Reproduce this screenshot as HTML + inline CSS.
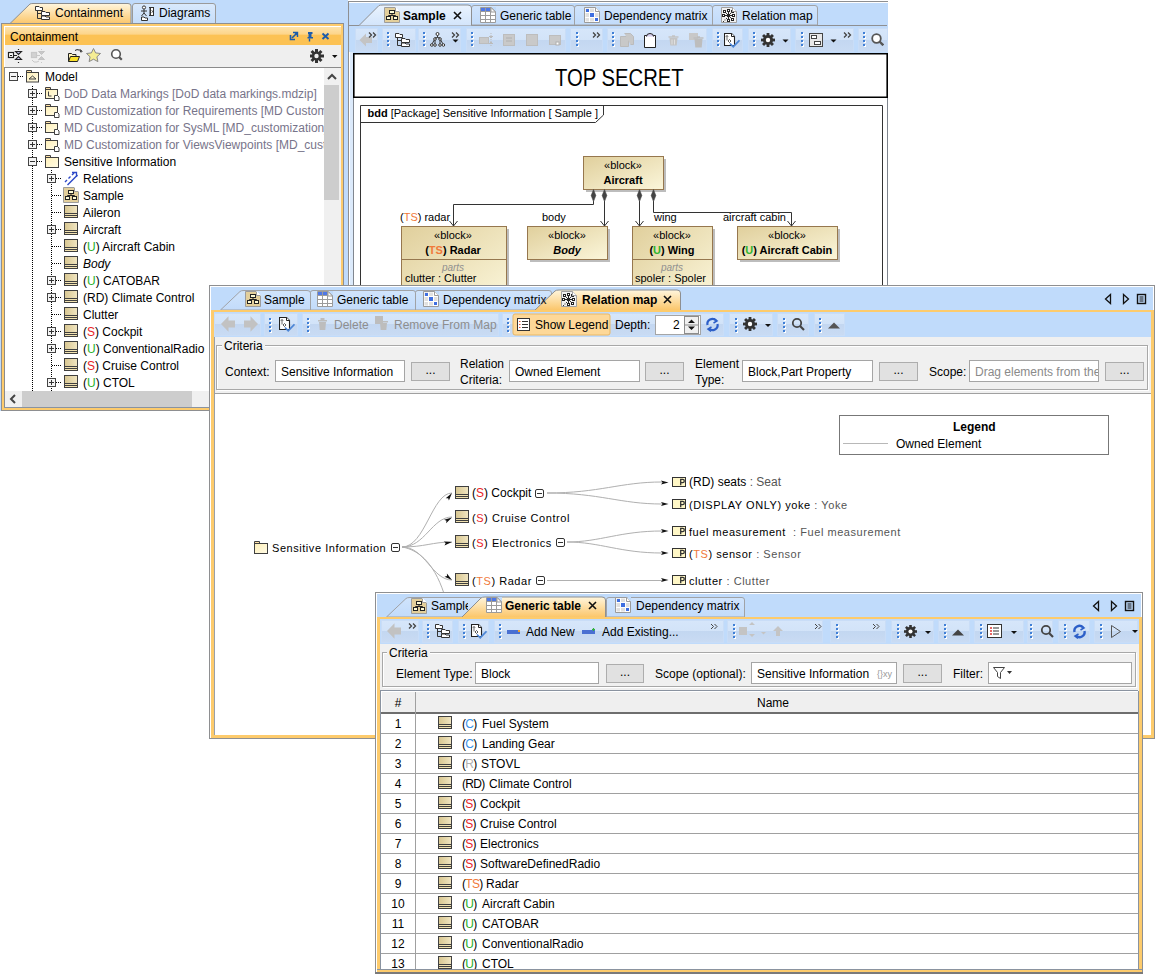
<!DOCTYPE html>
<html><head><meta charset="utf-8">
<style>
*{box-sizing:border-box;margin:0;padding:0}
html,body{width:1156px;height:974px;overflow:hidden;background:#fff;font-family:"Liberation Sans",sans-serif;font-size:12px;color:#000}
.a{position:absolute}
.t{position:absolute;white-space:nowrap;line-height:14px}
.blue{background:#C0DBFB}
.gray{background:#8E8F91}
.org{background:#FDCB6C}
.tb{background:linear-gradient(#D6E7FB 0,#D2E4FA 50%,#C4D9F3 50%,#CADDF5 100%)}
.tbg{background:linear-gradient(#D6E6FA 0,#D2E3F8 50%,#C3D7F1 50%,#C9DBF3 100%);border:1px solid #C9DDF7}
.sep{position:absolute;width:3px;height:15px;background:repeating-linear-gradient(#3F7FD6 0 2px,transparent 2px 4px) 0 0/2px 15px no-repeat,repeating-linear-gradient(#fff 0 2px,transparent 2px 4px) 1px 1px/2px 14px no-repeat}
.fld{position:absolute;background:#fff;border:1px solid #A5A5A5}
.btn{position:absolute;background:#E1E1E1;border:1px solid #ADADAD;text-align:center;line-height:15px}
.bi{position:absolute;width:14px;height:13px;background:linear-gradient(#F0E2BC,#C9B27A);border:1px solid #6B6B6B}
.bi:after{content:"";position:absolute;left:1px;right:1px;top:7px;height:3px;border-top:1px solid #555;border-bottom:1px solid #555}
.lg{color:#77748A}
.gy{color:#555}
.g{color:#28B028}.r{color:#E8262A}.o{color:#F07A3A}.c{color:#3A92E8}.gr{color:#B0B0B0}
</style></head><body>

<svg width="0" height="0" style="position:absolute">
<defs>
 <linearGradient id="gBlk" x1="0" y1="0" x2="1" y2="0"><stop offset="0" stop-color="#D8C690"/><stop offset="1" stop-color="#F1E6C2"/></linearGradient>
 <linearGradient id="gFold" x1="0" y1="0" x2="1" y2="1"><stop offset="0" stop-color="#FFF0B8"/><stop offset="1" stop-color="#FFFBE6"/></linearGradient>
 <symbol id="blk" viewBox="0 0 14 13"><rect x="0.5" y="0.5" width="13" height="12" fill="url(#gBlk)" stroke="#404040"/><path d="M1 8.5h12 M1 10.5h12" stroke="#404040"/><path d="M1 9.5h12 M1 11.5h12" stroke="#F2E2B0"/></symbol>
 <symbol id="exP" viewBox="0 0 9 9"><rect x="0.5" y="0.5" width="8" height="8" fill="#F4F4F4" stroke="#444"/><path d="M2 4.5h5 M4.5 2v5" stroke="#333"/></symbol>
 <symbol id="exM" viewBox="0 0 9 9"><rect x="0.5" y="0.5" width="8" height="8" fill="#F4F4F4" stroke="#444"/><path d="M2 4.5h5" stroke="#333"/></symbol>
 <symbol id="exMr" viewBox="0 0 9 9"><rect x="0.5" y="0.5" width="8" height="8" rx="1.5" fill="#fff" stroke="#333"/><path d="M2 4.5h5" stroke="#333"/></symbol>
 <symbol id="fold" viewBox="0 0 14 13"><path d="M0.5 2.5v-2h5v2" fill="#FFE2A8" stroke="#404040"/><rect x="0.5" y="2.5" width="13" height="10" fill="url(#gFold)" stroke="#404040"/></symbol>
 <symbol id="model" viewBox="0 0 14 13"><path d="M0.5 2.5v-2h5v2" fill="#FFE2A8" stroke="#404040"/><rect x="0.5" y="2.5" width="12" height="9.5" fill="url(#gFold)" stroke="#404040"/><path d="M3 9h7l-3.5-3z" fill="none" stroke="#404040"/></symbol>
 <symbol id="foldD" viewBox="0 0 15 14"><path d="M0.5 2.5v-2h5v2" fill="#FFE2A8" stroke="#404040"/><rect x="0.5" y="2.5" width="12" height="9" fill="url(#gFold)" stroke="#404040"/><path d="M9.5 8.5h3l1.5 1.5v3.5h-4.5z" fill="#fff" stroke="#404040"/></symbol>
 <symbol id="foldL" viewBox="0 0 15 14"><path d="M0.5 2.5v-2h5v2" fill="#FFE2A8" stroke="#404040"/><rect x="0.5" y="2.5" width="12" height="9" fill="url(#gFold)" stroke="#404040"/><path d="M3.5 4.5v4.5h3" fill="none" stroke="#404040"/><path d="M9.5 8.5h3l1.5 1.5v3.5h-4.5z" fill="#fff" stroke="#404040"/></symbol>
 <symbol id="diag" viewBox="0 0 16 16"><path d="M0.5 0.5H11.5L15.5 4.5V15.5H0.5Z" fill="#E3CF9B" stroke="#9C9C9C"/><path d="M11.5 0.5V4.5H15.5" fill="#fff" stroke="#9C9C9C"/><path d="M11.5 0.5L15.5 4.5" stroke="#fff"/><rect x="5.5" y="3.5" width="5" height="3" fill="#FFFBD6" stroke="#222"/><path d="M8 6.5V8.5 M4.5 8.5H11.5 M4.5 8.5V9.5 M11.5 8.5V9.5" stroke="#222" fill="none"/><rect x="2.5" y="9.5" width="4" height="3" fill="#FFFBD6" stroke="#222"/><rect x="9.5" y="9.5" width="4" height="3" fill="#FFFBD6" stroke="#222"/></symbol>
 <symbol id="rel" viewBox="0 0 15 15"><path d="M1 11l2-2 M4.5 7.5l2-2 M8 4l2-2" stroke="#2D48C8" stroke-width="1.4"/><path d="M8 1.5h4.5v4.5" fill="none" stroke="#2D48C8" stroke-width="1.3"/><path d="M3.5 14l10-10" stroke="#2D48C8" stroke-width="1.4"/></symbol>
 <symbol id="prop" viewBox="0 0 14 10"><rect x="0.5" y="0.5" width="13" height="9" fill="#FFF7C6" stroke="#333"/><path d="M8.7 8.3V2.4h2q1.6 0 1.6 1.6t-1.6 1.6h-2" fill="none" stroke="#333" stroke-width="1.3"/></symbol>

 <symbol id="tblI" viewBox="0 0 16 16"><path d="M0.5 0.5h11l4 4v11h-15z" fill="#fff" stroke="#9B9B9B"/><path d="M5.5 0v16 M10.5 0v16 M0 4.5h16 M0 8.5h16 M0 12.5h16" stroke="#9B9B9B"/><rect x="1" y="1" width="4" height="3" fill="#4F78E6"/><rect x="6" y="1" width="4" height="3" fill="#4F78E6"/><path d="M11 0.5l4.5 4.5h-4.5z" fill="#fff" stroke="#9B9B9B"/><path d="M11.5 0l5 5V0z" fill="#C0DBFB"/></symbol>
 <symbol id="dmI" viewBox="0 0 16 16"><path d="M0.5 0.5h11l4 4v11h-15z" fill="#fff" stroke="#9B9B9B"/><g fill="#E0E0E0"><rect x="1.5" y="1.5" width="3.5" height="3.5"/><rect x="6" y="1.5" width="4" height="3.5"/><rect x="1.5" y="6" width="3.5" height="4"/><rect x="11" y="6" width="3.5" height="4"/><rect x="1.5" y="11" width="3.5" height="3.5"/><rect x="6" y="11" width="4" height="3.5"/></g><rect x="2" y="2" width="3" height="3" fill="#3F6FE0"/><rect x="6" y="6" width="4" height="4" fill="#3F6FE0"/><rect x="11" y="11" width="3" height="3" fill="#3F6FE0"/><path d="M11.5 0.5v4h4" fill="#fff" stroke="#9B9B9B"/><path d="M12 0l4 4V0z" fill="#C0DBFB"/></symbol>
 <symbol id="rmI" viewBox="0 0 16 16"><path d="M0.5 0.5h11l4 4v11h-15z" fill="#F0F0F0" stroke="#A0A0A0"/><path d="M11.5 0.5v4h4" fill="#fff" stroke="#A0A0A0"/><path d="M7.5 5V12 M4 8.5H11" stroke="#222"/><path d="M5 6h1v1h-1z M9 10h1v1h-1z M9 6h1v1h-1z M2 14h1v1h-1z M3.5 12.5h1v1h-1z M5 11h1v1h-1z" fill="#333"/><g fill="#fff" stroke="#222"><rect x="2.5" y="3.5" width="2" height="2"/><rect x="6.5" y="2.5" width="2" height="2"/><rect x="1.5" y="7.5" width="2" height="2"/><rect x="11.5" y="7.5" width="2" height="2"/><rect x="6.5" y="12.5" width="2" height="2"/><rect x="10.5" y="11.5" width="2" height="2"/></g><path d="M10.5 3v2.5H13" fill="none" stroke="#222"/><rect x="6" y="7" width="3" height="3" fill="#222"/></symbol>

 <symbol id="raq" viewBox="0 0 9 6"><path d="M1 0.5l2.5 2.5L1 5.5 M5 0.5l2.5 2.5L5 5.5" fill="none" stroke="#444" stroke-width="1.3"/></symbol>
 <symbol id="dd" viewBox="0 0 7 4"><path d="M0.5 0.5h6l-3 3z" fill="#111"/></symbol>
 <symbol id="backG" viewBox="0 0 14 14"><path d="M0.5 7l6.5-6.5v3.5h6v6h-6v3.5z" fill="#C4C4C4"/></symbol>
 <symbol id="fwdG" viewBox="0 0 14 14"><path d="M13.5 7l-6.5-6.5v3.5h-6v6h6v3.5z" fill="#C4C4C4"/></symbol>
 <symbol id="treeI" viewBox="0 0 15 14"><path d="M0.5 0.5H4L5 1.5H7.5V4.5H0.5Z" fill="#fff" stroke="#333"/><path d="M2.5 4.5V12.5H6 M2.5 7.5H6" fill="none" stroke="#333"/><path d="M6.5 5.5H10L11 6.5H14.5V9.5H6.5Z" fill="#fff" stroke="#333"/><path d="M6.5 10H10L11 11H14.5V13.5H6.5Z" fill="#fff" stroke="#333"/></symbol>
 <symbol id="hier" viewBox="0 0 16 15"><g fill="#fff" stroke="#333"><circle cx="7.5" cy="2" r="1.5"/><circle cx="5" cy="7" r="1.3"/><circle cx="10" cy="7" r="1.3"/><circle cx="1.8" cy="13" r="1.3"/><circle cx="5" cy="13" r="1.3"/><circle cx="10" cy="13" r="1.3"/><circle cx="13.4" cy="13" r="1.3"/></g><path d="M7.5 3.5v2 M5 8.3v3.4 M10 8.3v3.4 M7.5 5.5l-2.5 0.5 M7.5 5.5l2.5 0.5 M4.2 8l-2 3.8 M10.8 8l2 3.8" stroke="#333" fill="none"/></symbol>
 <symbol id="validI" viewBox="0 0 16 15"><path d="M0.5 0.5h7l3 3v9h-10z" fill="#fff" stroke="#222" stroke-width="1.1"/><path d="M7.5 0.5v3h3" fill="#fff" stroke="#222"/><path d="M3 2.5v5" stroke="#444" stroke-width="0.8"/><path d="M1.8 3.8L3 2.5 4.2 3.8" fill="none" stroke="#444" stroke-width="0.8"/><path d="M5.5 6.5l1.5 1.5-1.5 1.5-1.5-1.5z" fill="#fff" stroke="#333" stroke-width="0.8"/><path d="M6 10.5l3.2 3.3 6.3-6.5" fill="none" stroke="#4D86D6" stroke-width="1.7"/></symbol>
 <symbol id="gearI" viewBox="0 0 14 14"><g fill="#333"><rect x="5.6" y="0" width="2.8" height="14"/><rect x="0" y="5.6" width="14" height="2.8"/><rect x="5.6" y="0" width="2.8" height="14" transform="rotate(45 7 7)"/><rect x="5.6" y="0" width="2.8" height="14" transform="rotate(-45 7 7)"/><circle cx="7" cy="7" r="5"/></g><circle cx="7" cy="7" r="2.2" fill="#fff"/></symbol>
 <symbol id="searchI" viewBox="0 0 13 13"><circle cx="5.5" cy="5.5" r="4.3" fill="#fff" stroke="#555" stroke-width="1.8"/><path d="M8.5 8.5l3.8 3.8" stroke="#555" stroke-width="2.4"/></symbol>
 <symbol id="layoutI" viewBox="0 0 14 14"><rect x="0.5" y="0.5" width="13" height="13" fill="#E8E8E8" stroke="#444"/><rect x="2.5" y="2.5" width="5" height="3" fill="#fff" stroke="#444"/><rect x="5.5" y="8.5" width="6" height="3" fill="#fff" stroke="#444"/></symbol>
 <symbol id="copyG" viewBox="0 0 14 14"><path d="M0.5 3.5h6l2 2v8h-8z" fill="#C8C8C8" stroke="#BBB"/><path d="M4.5 0.5h6l3 3v8h-3" fill="#C8C8C8" stroke="#BBB"/></symbol>
 <symbol id="pasteI" viewBox="0 0 12 15"><path d="M0.5 2.5h11v12h-11z" fill="#fff" stroke="#222"/><path d="M2.5 3.5q0-3 3.5-3t3.5 3" fill="#D8D0F0" stroke="#222"/></symbol>
 <symbol id="trashG" viewBox="0 0 11 11"><path d="M0.5 2h10 M4 1h3" stroke="#C4C4C4" stroke-width="1.5"/><path d="M1.5 3h8l-0.8 7.5h-6.4z" fill="#C4C4C4"/><path d="M4 4.5v5 M6.5 4.5v5" stroke="#E0E0E0"/></symbol>
 <symbol id="trash2G" viewBox="0 0 15 15"><rect x="0" y="0" width="9" height="7" fill="#C8C8C8"/><path d="M4.5 5h10 M8 4h3" stroke="#BDBDBD" stroke-width="1.5"/><path d="M5.5 6h8l-0.8 8.5h-6.4z" fill="#BDBDBD"/></symbol>

 <symbol id="backB" viewBox="0 0 14 16"><path d="M0 8L7.5 0.3V4.5H14V11.5H7.5V15.7Z" fill="#C2C2C2"/></symbol>
 <symbol id="fwdB" viewBox="0 0 14 16"><path d="M14 8L6.5 0.3V4.5H0V11.5H6.5V15.7Z" fill="#C2C2C2"/></symbol>
</defs></svg>
<!-- ============ LEFT: Containment ============ -->
<div class="a blue" style="left:0;top:0;width:348px;height:411px"></div>
<div id="w1">
<!-- tabs -->
<svg class="a" style="left:0;top:0" width="348" height="30">
 <defs>
  <linearGradient id="gAct" x1="0" y1="0" x2="0" y2="1"><stop offset="0" stop-color="#FFF6DE"/><stop offset="1" stop-color="#FBC568"/></linearGradient>
  <linearGradient id="gInact" x1="0" y1="0" x2="0" y2="1"><stop offset="0" stop-color="#D9E9FC"/><stop offset="1" stop-color="#C6DDF9"/></linearGradient>
 </defs>
 <path d="M132.5 23.5 V6 Q132.5 3.5 135 3.5 H213 Q215.5 3.5 215.5 6 V23.5" fill="url(#gInact)" stroke="#9A9A9A"/>
 <path d="M1.5 24 V23.5 H10 L30 4 Q31 3.5 33 3.5 H128 Q131 3.5 131 6 V24 Z" fill="url(#gAct)" stroke="#8E8E8E"/>
</svg>
<!-- containment tab icon -->
<svg class="a" style="left:35px;top:6px" width="15" height="14"><use href="#treeI"/></svg>
<div class="t" style="left:55px;top:6px">Containment</div>
<svg class="a" style="left:140px;top:5px" width="16" height="16"><circle cx="4" cy="2.5" r="1.6" fill="#fff" stroke="#333"/><path d="M4 4.2v4 M1 6h6 M1.5 11l2.5-3 2.5 3" fill="none" stroke="#333"/><path d="M9 2.5h1.5 M9 10.5h1.5 M10 2.5v8" fill="none" stroke="#333"/><rect x="10.5" y="2.5" width="3" height="8" fill="#fff" stroke="#333"/><path d="M11.5 5.5l1.5 1-1.5 1" fill="none" stroke="#333" stroke-width="0.8"/><path d="M1.5 15.5v-3.5h2.5l1 1h2.5v2.5z" fill="#fff" stroke="#333"/></svg>
<div class="t" style="left:159px;top:6px">Diagrams</div>
<!-- frame -->
<div class="a gray" style="left:1px;top:23px;width:343px;height:388px"></div>
<div class="a org" style="left:2px;top:24px;width:341px;height:386px"></div>
<div class="a" style="left:4px;top:26px;width:337px;height:382px;background:#fff"></div>
<!-- header -->
<div class="a" style="left:5px;top:27px;width:336px;height:18px;background:linear-gradient(#FDE3AC 0,#FDD58A 40%,#FCC254 45%,#FCC254 100%)"></div>
<div class="t" style="left:10px;top:30px">Containment</div>
<svg class="a" style="left:287px;top:29px" width="50" height="14">
 <path d="M3.5 6V10.5H8" fill="none" stroke="#1D5CAB" stroke-width="1.6"/><path d="M6 3.5H10.5V8" fill="none" stroke="#1D5CAB" stroke-width="1.4"/><path d="M5 9L10 4" stroke="#1D5CAB" stroke-width="1.6"/><path d="M7 3.5h3.5V7z" fill="#1D5CAB"/>
 <path d="M21 3h4.5v2h-1v3h1.5v1.5h-5.5V8h1V5h-0.5z" fill="#1D5CAB"/><path d="M22.5 9.5v3" stroke="#1D5CAB" stroke-width="1.4"/>
 <path d="M35.5 4.5l6 5.5 M41.5 4.5l-6 5.5" stroke="#1D5CAB" stroke-width="1.9"/>
</svg>
<!-- toolbar -->
<div class="a" style="left:5px;top:45px;width:336px;height:22px;background:#EFEFEF"></div>
<svg class="a" style="left:4px;top:46px" width="125" height="20">
 <rect x="4.5" y="6.5" width="5" height="5" fill="#fff" stroke="#222" stroke-width="1.2"/><path d="M6 9.5h2 M10 9.5h3" stroke="#222"/>
 <path d="M11.5 5.5h6l-3 3z M11.5 13.5h6l-3-3z" fill="#C8C8F0" stroke="#222" stroke-width="1.1"/><path d="M14.5 3v1 M14.5 16v1" stroke="#222" stroke-width="1.2"/>
 <g opacity="0.9"><rect x="27.5" y="6.5" width="5" height="5" fill="#CFCFCF" stroke="#C4C4C4" stroke-width="1.2"/><path d="M33 9.5h3" stroke="#C4C4C4"/><path d="M34.5 5.5h6l-3 3z M34.5 13.5h6l-3-3z" fill="#C4C4C4" stroke="#C0C0C0"/><path d="M28 14l2 2h3l2-1" fill="none" stroke="#C4C4C4"/><path d="M37.5 3v1 M37.5 16v1" stroke="#C4C4C4"/></g>
 <path d="M64.5 15.5V7.5h3l1 1h3.5v2" fill="#FFF3B8" stroke="#222"/><path d="M64.5 15.5l2-5h9l-2 5z" fill="#F9E02A" stroke="#222"/><path d="M71 4.5q2-1.5 4-0.5h2v2.5" fill="none" stroke="#222"/><path d="M76 6l1.2-1.5 1.2 1.5" fill="none" stroke="#222" stroke-width="0.8"/>
 <path d="M89.5 2.5l2.1 4.4 4.9.6-3.6 3.3 1 4.8-4.4-2.4-4.4 2.4 1-4.8-3.6-3.3 4.9-.6z" fill="#F6EE94" stroke="#888"/>
 <circle cx="112" cy="8" r="4.3" fill="#fff" stroke="#555" stroke-width="1.6"/><path d="M115 11l2.8 2.8" stroke="#555" stroke-width="2.2"/>
</svg>
<svg class="a" style="left:305px;top:47px" width="34" height="18">
 <g transform="translate(5 2)"><rect x="5" y="0" width="3" height="14" fill="#333"/><rect x="0" y="5.5" width="14" height="3" fill="#333"/><rect x="5" y="0" width="3" height="14" fill="#333" transform="rotate(45 6.5 7)"/><rect x="5" y="0" width="3" height="14" fill="#333" transform="rotate(-45 6.5 7)"/><circle cx="6.5" cy="7" r="4.6" fill="#333"/><circle cx="6.5" cy="7" r="2.2" fill="#EFEFEF"/></g>
 <path d="M27 8h5.5l-2.75 3z" fill="#111"/>
</svg>
<!-- tree border -->
<div class="a" style="left:4px;top:67px;width:337px;height:341px;border-top:1px solid #8B8B8B;border-left:1px solid #8B8B8B"></div>
<div class="a" style="left:5px;top:68px;width:319px;height:323px;background:#fff;overflow:hidden" id="tree"><svg class="a" style="left:0;top:0" width="336" height="340"><path d="M27.5 18V332" stroke="#000" stroke-dasharray="1 1"/><path d="M46.5 102V332" stroke="#000" stroke-dasharray="1 1"/><path d="M13 8.5H18" stroke="#000" stroke-dasharray="1 1"/><svg x="4" y="4" width="9" height="9"><use href="#exM"/></svg><svg x="21" y="2" width="14" height="13"><use href="#model"/></svg><path d="M32 25.5H38" stroke="#000" stroke-dasharray="1 1"/><svg x="23" y="21" width="9" height="9"><use href="#exP"/></svg><svg x="40" y="19" width="15" height="14"><use href="#foldL"/></svg><path d="M32 42.5H38" stroke="#000" stroke-dasharray="1 1"/><svg x="23" y="38" width="9" height="9"><use href="#exP"/></svg><svg x="40" y="36" width="15" height="14"><use href="#foldD"/></svg><path d="M32 59.5H38" stroke="#000" stroke-dasharray="1 1"/><svg x="23" y="55" width="9" height="9"><use href="#exP"/></svg><svg x="40" y="53" width="15" height="14"><use href="#foldD"/></svg><path d="M32 76.5H38" stroke="#000" stroke-dasharray="1 1"/><svg x="23" y="72" width="9" height="9"><use href="#exP"/></svg><svg x="40" y="70" width="15" height="14"><use href="#foldD"/></svg><path d="M32 93.5H38" stroke="#000" stroke-dasharray="1 1"/><svg x="23" y="89" width="9" height="9"><use href="#exM"/></svg><svg x="40" y="87" width="14" height="13"><use href="#fold"/></svg><path d="M51 110.5H57" stroke="#000" stroke-dasharray="1 1"/><svg x="42" y="106" width="9" height="9"><use href="#exP"/></svg><svg x="59" y="103" width="15" height="15"><use href="#rel"/></svg><path d="M47 127.5H57" stroke="#000" stroke-dasharray="1 1"/><svg x="58" y="119" width="16" height="16"><use href="#diag"/></svg><path d="M47 144.5H57" stroke="#000" stroke-dasharray="1 1"/><svg x="59" y="137" width="14" height="13"><use href="#blk"/></svg><path d="M51 161.5H57" stroke="#000" stroke-dasharray="1 1"/><svg x="42" y="157" width="9" height="9"><use href="#exP"/></svg><svg x="59" y="154" width="14" height="13"><use href="#blk"/></svg><path d="M47 178.5H57" stroke="#000" stroke-dasharray="1 1"/><svg x="59" y="171" width="14" height="13"><use href="#blk"/></svg><path d="M47 195.5H57" stroke="#000" stroke-dasharray="1 1"/><svg x="59" y="188" width="14" height="13"><use href="#blk"/></svg><path d="M51 212.5H57" stroke="#000" stroke-dasharray="1 1"/><svg x="42" y="208" width="9" height="9"><use href="#exP"/></svg><svg x="59" y="205" width="14" height="13"><use href="#blk"/></svg><path d="M51 229.5H57" stroke="#000" stroke-dasharray="1 1"/><svg x="42" y="225" width="9" height="9"><use href="#exP"/></svg><svg x="59" y="222" width="14" height="13"><use href="#blk"/></svg><path d="M47 246.5H57" stroke="#000" stroke-dasharray="1 1"/><svg x="59" y="239" width="14" height="13"><use href="#blk"/></svg><path d="M51 263.5H57" stroke="#000" stroke-dasharray="1 1"/><svg x="42" y="259" width="9" height="9"><use href="#exP"/></svg><svg x="59" y="256" width="14" height="13"><use href="#blk"/></svg><path d="M51 280.5H57" stroke="#000" stroke-dasharray="1 1"/><svg x="42" y="276" width="9" height="9"><use href="#exP"/></svg><svg x="59" y="273" width="14" height="13"><use href="#blk"/></svg><path d="M47 297.5H57" stroke="#000" stroke-dasharray="1 1"/><svg x="59" y="290" width="14" height="13"><use href="#blk"/></svg><path d="M51 314.5H57" stroke="#000" stroke-dasharray="1 1"/><svg x="42" y="310" width="9" height="9"><use href="#exP"/></svg><svg x="59" y="307" width="14" height="13"><use href="#blk"/></svg></svg><div class="t" style="left:40px;top:2px">Model</div><div class="t lg" style="left:59px;top:19px">DoD Data Markings [DoD data markings.mdzip]</div><div class="t lg" style="left:59px;top:36px">MD Customization for Requirements [MD Customization for Requirements.mdzip]</div><div class="t lg" style="left:59px;top:53px">MD Customization for SysML [MD_customization_for_SysML.mdzip]</div><div class="t lg" style="left:59px;top:70px">MD Customization for ViewsViewpoints [MD_customization_for_ViewsViewpoints.mdzip]</div><div class="t" style="left:59px;top:87px">Sensitive Information</div><div class="t" style="left:78px;top:104px">Relations</div><div class="t" style="left:78px;top:121px">Sample</div><div class="t" style="left:78px;top:138px">Aileron</div><div class="t" style="left:78px;top:155px">Aircraft</div><div class="t" style="left:78px;top:172px">(<span class="g">U</span>) Aircraft Cabin</div><div class="t" style="left:78px;top:189px"><i>Body</i></div><div class="t" style="left:78px;top:206px">(<span class="g">U</span>) CATOBAR</div><div class="t" style="left:78px;top:223px">(RD) Climate Control</div><div class="t" style="left:78px;top:240px">Clutter</div><div class="t" style="left:78px;top:257px">(<span class="r">S</span>) Cockpit</div><div class="t" style="left:78px;top:274px">(<span class="g">U</span>) ConventionalRadio</div><div class="t" style="left:78px;top:291px">(<span class="r">S</span>) Cruise Control</div><div class="t" style="left:78px;top:308px">(<span class="g">U</span>) CTOL</div></div>
<!-- vscroll -->
<div class="a" style="left:324px;top:68px;width:17px;height:323px;background:#F0F0F0"></div>
<div class="a" style="left:324px;top:85px;width:15px;height:115px;background:#CDCDCD"></div>
<svg class="a" style="left:324px;top:70px" width="16" height="14"><path d="M4 9l4-4 4 4" fill="none" stroke="#444" stroke-width="2"/></svg>
<!-- hscroll -->
<div class="a" style="left:5px;top:391px;width:336px;height:16px;background:#F0F0F0"></div>
<div class="a" style="left:22px;top:391px;width:170px;height:16px;background:#CDCDCD"></div>
<svg class="a" style="left:6px;top:392px" width="14" height="14"><path d="M9 3l-4 4 4 4" fill="none" stroke="#444" stroke-width="2"/></svg>
<div class="a" style="left:4px;top:407px;width:337px;height:1px;background:#8A93A0"></div>
</div>

<!-- ============ SAMPLE diagram window ============ -->
<div id="w2">
<div class="a" style="left:348px;top:1px;width:540px;height:290px;background:#fff;border:1px solid #8E8F91;border-right:none"></div>
<div class="a blue" style="left:349px;top:3px;width:539px;height:50px"></div>
<div class="a" style="left:349px;top:2px;width:539px;height:1px;background:#fff"></div>
<svg class="a" style="left:348px;top:0" width="540" height="27">
 <defs>
  <linearGradient id="gTabA" x1="0" y1="0" x2="0" y2="1"><stop offset="0" stop-color="#EAF3FE"/><stop offset="1" stop-color="#D3E5FB"/></linearGradient>
  <linearGradient id="gTabI" x1="0" y1="0" x2="0" y2="1"><stop offset="0" stop-color="#D0E4FC"/><stop offset="1" stop-color="#C2DBFA"/></linearGradient>
 </defs>
 <path d="M1 25.5H539" stroke="#8E8F91"/>
 <path d="M470.5 25V8Q470.5 5.5 473 5.5H362Z" fill="none"/>
 <path d="M364.5 25V8Q364.5 5.5 367 5.5H467Q469.5 5.5 469.5 8V25" transform="translate(-0)" fill="none"/>
 <path d="M123.5 25V8Q123.5 5.5 126 5.5H224Q226.5 5.5 226.5 8V25Z" fill="url(#gTabI)" stroke="#A0A2A6"/>
 <path d="M226.5 25V8Q226.5 5.5 229 5.5H362Q364.5 5.5 364.5 8V25Z" fill="url(#gTabI)" stroke="#A0A2A6"/>
 <path d="M364.5 25V8Q364.5 5.5 367 5.5H467Q469.5 5.5 469.5 8V25Z" fill="url(#gTabI)" stroke="#A0A2A6"/>
 <path d="M1 25.5H11L31 5.5Q32 5 35 5H120Q123.5 5 123.5 8V25.5" fill="url(#gTabA)" stroke="#8E8F91"/>
</svg>
<svg class="a" style="left:384px;top:7px" width="16" height="16"><use href="#diag"/></svg>
<div class="t" style="left:403px;top:9px;font-weight:bold">Sample</div>
<svg class="a" style="left:452px;top:10px" width="12" height="12"><path d="M2 2l7 7M9 2l-7 7" stroke="#111" stroke-width="1.6"/></svg>
<svg class="a" style="left:480px;top:7px" width="16" height="16"><use href="#tblI"/></svg>
<div class="t" style="left:500px;top:9px">Generic table</div>
<svg class="a" style="left:584px;top:7px" width="16" height="16"><use href="#dmI"/></svg>
<div class="t" style="left:604px;top:9px">Dependency matrix</div>
<svg class="a" style="left:721px;top:7px" width="16" height="16"><use href="#rmI"/></svg>
<div class="t" style="left:742px;top:9px">Relation map</div>
<!-- toolbar -->
<div class="a tbg" style="left:355px;top:28px;width:23px;height:24px"></div><div class="a tbg" style="left:382px;top:28px;width:34px;height:24px"></div><div class="a tbg" style="left:418px;top:28px;width:43px;height:24px"></div><div class="a tbg" style="left:466px;top:28px;width:100px;height:24px"></div><div class="a tbg" style="left:570px;top:28px;width:33px;height:24px"></div><div class="a tbg" style="left:607px;top:28px;width:100px;height:24px"></div><div class="a tbg" style="left:712px;top:28px;width:31px;height:24px"></div><div class="a tbg" style="left:748px;top:28px;width:43px;height:24px"></div><div class="a tbg" style="left:795px;top:28px;width:59px;height:24px"></div><div class="a tbg" style="left:858px;top:28px;width:30px;height:24px"></div>
<div class="sep" style="left:387px;top:32px"></div><div class="sep" style="left:423px;top:32px"></div><div class="sep" style="left:471px;top:32px"></div><div class="sep" style="left:576px;top:32px"></div><div class="sep" style="left:612px;top:32px"></div><div class="sep" style="left:717px;top:32px"></div><div class="sep" style="left:753px;top:32px"></div><div class="sep" style="left:801px;top:32px"></div><div class="sep" style="left:863px;top:32px"></div><svg class="a" style="left:359px;top:33px" width="14" height="14"><use href="#backG"/></svg><svg class="a" style="left:368px;top:32px" width="9" height="6"><use href="#raq"/></svg><svg class="a" style="left:395px;top:33px" width="15" height="14"><use href="#treeI"/></svg><svg class="a" style="left:430px;top:32px" width="16" height="15"><use href="#hier"/></svg><svg class="a" style="left:451px;top:32px" width="9" height="6"><use href="#raq"/></svg><svg class="a" style="left:452px;top:39px" width="7" height="4"><use href="#dd"/></svg><svg class="a" style="left:478px;top:33px" width="90" height="15"><g fill="#C9C9C9" stroke="#BDBDBD"><rect x="1.5" y="4.5" width="9" height="6"/><rect x="25.5" y="1.5" width="11" height="11"/><rect x="48.5" y="1.5" width="11" height="11"/><rect x="71.5" y="2.5" width="11" height="9"/></g><path d="M13 0v14" stroke="#BBB" stroke-dasharray="1 1"/><path d="M11 3l2 2 2-2 M11 11l2-2 2 2" fill="#BBB" stroke="#BBB"/><path d="M28 5h6 M28 8h6" stroke="#B0B0B0"/><rect x="78" y="9" width="3" height="3" fill="#fff" stroke="#B0B0B0"/></svg><svg class="a" style="left:592px;top:32px" width="9" height="6"><use href="#raq"/></svg><svg class="a" style="left:620px;top:33px" width="14" height="14"><use href="#copyG"/></svg><svg class="a" style="left:644px;top:33px" width="12" height="15"><use href="#pasteI"/></svg><svg class="a" style="left:668px;top:35px" width="11" height="11"><use href="#trashG"/></svg><svg class="a" style="left:689px;top:33px" width="15" height="15"><use href="#trash2G"/></svg><svg class="a" style="left:724px;top:33px" width="16" height="15"><use href="#validI"/></svg><svg class="a" style="left:761px;top:33px" width="14" height="14"><use href="#gearI"/></svg><svg class="a" style="left:782px;top:39px" width="7" height="4"><use href="#dd"/></svg><svg class="a" style="left:809px;top:33px" width="14" height="14"><use href="#layoutI"/></svg><svg class="a" style="left:830px;top:39px" width="7" height="4"><use href="#dd"/></svg><svg class="a" style="left:843px;top:32px" width="9" height="6"><use href="#raq"/></svg><svg class="a" style="left:871px;top:33px" width="13" height="13"><use href="#searchI"/></svg>
<div class="a" style="left:349px;top:53px;width:539px;height:240px;background:#fff"></div>
<div class="a" style="left:349px;top:52px;width:1px;height:240px;background:#fff"></div>
<div class="a" style="left:350px;top:52px;width:3px;height:240px;background:#DCEAFB"></div>
<div class="a" style="left:353px;top:53px;width:1px;height:240px;background:#80868F"></div>
<div class="a" style="left:887px;top:97px;width:1px;height:200px;background:#80868F"></div>
<div class="a" style="left:353px;top:53px;width:535px;height:45px;border:1px solid #000;box-shadow:inset 0 0 0 0.6px #000"></div>
<div class="t" style="left:555px;top:65px;font-size:23.5px;line-height:26px;transform:scaleX(0.862);transform-origin:0 0;color:#000">TOP SECRET</div>
<svg class="a" style="left:348px;top:98px" width="540" height="200" font-family="Liberation Sans" font-size="11">
 <defs>
  <linearGradient id="gBlock" x1="0" y1="0" x2="1" y2="1"><stop offset="0" stop-color="#E0CF9C"/><stop offset="1" stop-color="#FBF6DA"/></linearGradient>
 </defs>
 <path d="M12.5 200V7.5H534.5V200" fill="none" stroke="#333"/>
 <path d="M12.5 24.5H247.5L255.5 17V7.5" fill="none" stroke="#333"/>
 <text x="19.5" y="18.5"><tspan font-weight="bold">bdd</tspan> [Package] Sensitive Information [ Sample ]</text>
<rect x="238" y="61" width="80" height="33" fill="#BDBDBD"/><rect x="235.5" y="58.5" width="80" height="33" fill="url(#gBlock)" stroke="#96774E"/><rect x="56" y="131" width="105" height="74" fill="#BDBDBD"/><rect x="53.5" y="128.5" width="105" height="74" fill="url(#gBlock)" stroke="#96774E"/><path d="M53.5 161.5H158.5" stroke="#96774E"/><rect x="182" y="131" width="80" height="33" fill="#BDBDBD"/><rect x="179.5" y="128.5" width="80" height="33" fill="url(#gBlock)" stroke="#96774E"/><rect x="287" y="131" width="80" height="74" fill="#BDBDBD"/><rect x="284.5" y="128.5" width="80" height="74" fill="url(#gBlock)" stroke="#96774E"/><path d="M284.5 161.5H364.5" stroke="#96774E"/><rect x="392" y="131" width="100" height="33" fill="#BDBDBD"/><rect x="389.5" y="128.5" width="100" height="33" fill="url(#gBlock)" stroke="#96774E"/><text x="275" y="71" text-anchor="middle" >«block»</text><text x="275" y="86" text-anchor="middle" font-weight="bold">Aircraft</text><text x="105" y="141" text-anchor="middle" >«block»</text><text x="105" y="156" text-anchor="middle" font-weight="bold">(<tspan fill="#F07A3A">TS</tspan>) Radar</text><text x="105" y="173" text-anchor="middle" font-style="italic" fill="#909090" font-size="10">parts</text><text x="57" y="184" text-anchor="start" >clutter : Clutter</text><text x="219" y="141" text-anchor="middle" >«block»</text><text x="219" y="156" text-anchor="middle" font-weight="bold" font-style="italic">Body</text><text x="324" y="141" text-anchor="middle" >«block»</text><text x="324" y="156" text-anchor="middle" font-weight="bold">(<tspan fill="#2FB52F">U</tspan>) Wing</text><text x="324" y="173" text-anchor="middle" font-style="italic" fill="#909090" font-size="10">parts</text><text x="287" y="184" text-anchor="start" >spoler : Spoler</text><text x="439" y="141" text-anchor="middle" >«block»</text><text x="439" y="156" text-anchor="middle" font-weight="bold">(<tspan fill="#2FB52F">U</tspan>) Aircraft Cabin</text><text x="52" y="123" text-anchor="start" >(<tspan fill="#F07A3A">TS</tspan>) radar</text><text x="194" y="123" text-anchor="start" >body</text><text x="306" y="123" text-anchor="start" >wing</text><text x="375" y="123" text-anchor="start" >aircraft cabin</text><path d="M245.5 103V106.5H105.5V128" fill="none" stroke="#333"/><path d="M101.5 123L105.5 128L109.5 123" fill="none" stroke="#333"/><path d="M256.5 103V128" fill="none" stroke="#333"/><path d="M252.5 123L256.5 128L260.5 123" fill="none" stroke="#333"/><path d="M291.5 103V128" fill="none" stroke="#333"/><path d="M287.5 123L291.5 128L295.5 123" fill="none" stroke="#333"/><path d="M305.5 103V114.5H443.5V128" fill="none" stroke="#333"/><path d="M439.5 123L443.5 128L447.5 123" fill="none" stroke="#333"/><path d="M245.5 91.5L247.8 97.5L245.5 103.5L243.2 97.5Z" fill="#444" stroke="#444" stroke-width="0.6"/><path d="M256.5 91.5L258.8 97.5L256.5 103.5L254.2 97.5Z" fill="#444" stroke="#444" stroke-width="0.6"/><path d="M291.5 91.5L293.8 97.5L291.5 103.5L289.2 97.5Z" fill="#444" stroke="#444" stroke-width="0.6"/><path d="M305.5 91.5L307.8 97.5L305.5 103.5L303.2 97.5Z" fill="#444" stroke="#444" stroke-width="0.6"/>
</svg>
</div>

<!-- ============ RELATION MAP window ============ -->
<div id="w3">
<div class="a" style="left:209px;top:285px;width:946px;height:454px;background:#fff;border:1px solid #8E8F91"></div>
<div class="a blue" style="left:211px;top:287px;width:942px;height:23px"></div>
<svg class="a" style="left:209px;top:285px" width="946" height="27">
  <path d="M101.5 25V7.5Q101.5 5.5 104 5.5H204Q206.5 5.5 206.5 8V25Z" fill="url(#gTabI)" stroke="#A0A2A6"/>
 <path d="M206.5 25V7.5Q206.5 5.5 209 5.5H340Q342.5 5.5 342.5 8V25Z" fill="url(#gTabI)" stroke="#A0A2A6"/>
 <path d="M11.5 25L31 6.5Q32 5.5 35 5.5H98Q101.5 5.5 101.5 8V25Z" fill="url(#gTabI)" stroke="#A0A2A6"/>
 <path d="M325.5 25.5L346 6Q347 5 350 5H468Q471.5 5 471.5 8V25.5Z" fill="url(#gAct)" stroke="#8E8F91"/>
</svg>
<svg class="a" style="left:245px;top:291px" width="16" height="16"><use href="#diag"/></svg>
<div class="t" style="left:264px;top:293px">Sample</div>
<svg class="a" style="left:317px;top:291px" width="16" height="16"><use href="#tblI"/></svg>
<div class="t" style="left:337px;top:293px">Generic table</div>
<svg class="a" style="left:423px;top:291px" width="16" height="16"><use href="#dmI"/></svg>
<div class="t" style="left:443px;top:293px">Dependency matri<span style="opacity:.9">x</span></div>
<svg class="a" style="left:561px;top:291px" width="16" height="16"><use href="#rmI"/></svg>
<div class="t" style="left:582px;top:293px;font-weight:bold">Relation map</div>
<svg class="a" style="left:662px;top:294px" width="12" height="12"><path d="M2 2l7 7M9 2l-7 7" stroke="#111" stroke-width="1.6"/></svg>
<svg class="a" style="left:1100px;top:290px" width="50" height="18">
 <path d="M10.5 4.5v9l-5-4.5z" fill="none" stroke="#111" stroke-width="1.3"/>
 <path d="M23.5 4.5v9l5-4.5z" fill="none" stroke="#111" stroke-width="1.3"/>
 <rect x="37.5" y="4.5" width="8" height="9" fill="none" stroke="#111" stroke-width="1.4"/><path d="M39.5 7h4 M39.5 9h4 M39.5 11h4" stroke="#111"/>
</svg>
<!-- orange frame -->
<div class="a org" style="left:211px;top:310px;width:943px;height:428px"></div>
<div class="a" style="left:214px;top:312px;width:937px;height:423px;background:#F0F0F0;border-left:1px solid #9AA0A8"></div>
<div class="a blue" style="left:214px;top:312px;width:937px;height:25px"></div>
<div class="a tbg" style="left:214px;top:313px;width:47px;height:23px"></div><div class="a tbg" style="left:264px;top:313px;width:34px;height:23px"></div><div class="a tbg" style="left:302px;top:313px;width:197px;height:23px"></div><div class="a tbg" style="left:502px;top:313px;width:222px;height:23px"></div><div class="a tbg" style="left:729px;top:313px;width:44px;height:23px"></div><div class="a tbg" style="left:777px;top:313px;width:32px;height:23px"></div><div class="a tbg" style="left:814px;top:313px;width:31px;height:23px"></div><div class="sep" style="left:269px;top:318px"></div><div class="sep" style="left:307px;top:318px"></div><div class="sep" style="left:507px;top:318px"></div><div class="sep" style="left:735px;top:318px"></div><div class="sep" style="left:783px;top:318px"></div><div class="sep" style="left:819px;top:318px"></div>
<svg class="a" style="left:214px;top:312px" width="640" height="25">
 <svg x="7" y="4" width="14" height="16"><use href="#backB"/></svg><svg x="30" y="4" width="14" height="16"><use href="#fwdB"/></svg><svg x="65" y="5" width="16" height="15"><use href="#validI"/></svg>
 <g fill="#BDBDBD" transform="translate(103 5)"><rect x="1" y="3" width="9" height="1.5"/><rect x="3.5" y="1" width="4" height="2"/><path d="M2 5h7l-0.7 8h-5.6z"/></g>
 <g fill="#BDBDBD" transform="translate(160 3)"><rect x="1" y="1" width="8" height="8"/><rect x="5" y="6" width="9" height="1.5"/><path d="M6 8h7l-0.7 7h-5.6z"/></g>
 <g transform="translate(299 2)"><rect x="0" y="0" width="97" height="21" rx="2" fill="#FDD898" stroke="#E9B865"/><rect x="4.5" y="4.5" width="12" height="12" fill="#fff" stroke="#333"/><path d="M6 7.5h1.5 M6 10.5h1.5 M6 13.5h1.5" stroke="#E53" stroke-width="1.2"/><path d="M9 7.5h6 M9 10.5h6 M9 13.5h6" stroke="#333"/></g>
 <rect x="441.5" y="3.5" width="45" height="19" fill="#fff" stroke="#A5A5A5"/>
 <rect x="470.5" y="4.5" width="14" height="17" fill="#F0F0F0" stroke="#8C8C8C"/><path d="M474 11l3.5-3.5 3.5 3.5z M474 14.5l3.5 3.5 3.5-3.5z" fill="#111"/><path d="M471 13h13" stroke="#8C8C8C"/>
 <g transform="translate(491 4)" fill="none" stroke="#2D5FC8" stroke-width="2.2"><path d="M2.5 9a5 5 0 0 1 8.5-4.5"/><path d="M12.5 8a5 5 0 0 1-8.5 4.5"/><path d="M9 2.5l3 2.5-3.5 2" stroke-width="1.6"/><path d="M6 15.5l-3-2.5 3.5-2" stroke-width="1.6"/></g>
 <svg x="529" y="5" width="14" height="14"><use href="#gearI"/></svg><path d="M551 12h6l-3 3z" fill="#111"/>
 <g transform="translate(577 5)"><circle cx="6" cy="6" r="4.2" fill="none" stroke="#444" stroke-width="1.8"/><path d="M9 9l4 4" stroke="#444" stroke-width="2.2"/></g>
 <path d="M614 16.5l6-6 6 6z" fill="#555"/>
</svg>
<div class="t" style="left:334px;top:318px;color:#8E8E8E">Delete</div>
<div class="t" style="left:394px;top:318px;color:#8E8E8E">Remove From Map</div>
<div class="t" style="left:535px;top:318px">Show Legend</div>
<div class="t" style="left:615px;top:318px">Depth:</div>
<div class="t" style="left:673px;top:318px">2</div>
<!-- criteria -->
<div class="a" style="left:216px;top:345px;width:932px;height:45px;border:1px solid #A8A8A8;box-shadow:inset 1px 1px 0 #fff,1px 1px 0 #fff"></div>
<div class="t" style="left:222px;top:339px;background:#F0F0F0;padding:0 2px">Criteria</div>
<div class="t" style="left:225px;top:365px">Context:</div>
<div class="fld" style="left:275px;top:360px;width:130px;height:22px"></div>
<div class="t" style="left:281px;top:365px">Sensitive Information</div>
<div class="btn" style="left:411px;top:362px;width:39px;height:19px">...</div>
<div class="t" style="left:460px;top:357px">Relation</div>
<div class="t" style="left:460px;top:373px">Criteria:</div>
<div class="fld" style="left:509px;top:360px;width:131px;height:22px"></div>
<div class="t" style="left:515px;top:365px">Owned Element</div>
<div class="btn" style="left:645px;top:362px;width:39px;height:19px">...</div>
<div class="t" style="left:695px;top:357px">Element</div>
<div class="t" style="left:695px;top:373px">Type:</div>
<div class="fld" style="left:742px;top:360px;width:131px;height:22px"></div>
<div class="t" style="left:748px;top:365px">Block,Part Property</div>
<div class="btn" style="left:879px;top:362px;width:39px;height:19px">...</div>
<div class="t" style="left:929px;top:365px">Scope:</div>
<div class="fld" style="left:969px;top:360px;width:130px;height:22px;overflow:hidden"><div class="t" style="left:5px;top:4px;color:#8A8A8A">Drag elements from the</div></div>
<div class="btn" style="left:1105px;top:362px;width:39px;height:19px">...</div>
<!-- canvas -->
<div class="a" style="left:215px;top:393px;width:936px;height:342px;background:#fff;overflow:hidden" id="rmcanvas"><div class="a" style="left:0;top:0;width:936px;height:1px;background:#A0A0A0"></div><svg class="a" style="left:0;top:0" width="936" height="342"><path d="M628 50.5H673" stroke="#B8B8B8"/><svg x="39" y="148" width="14" height="13"><use href="#fold"/><path d="M187 154C203 154 221 122 231 108" fill="none" stroke="#B0B0B0"/><path d="M187 154C205 154 219 135 230 128.5" fill="none" stroke="#B0B0B0"/><path d="M187 154C205 154 217 152 229 150.5" fill="none" stroke="#B0B0B0"/><path d="M187 154C205 155 222 175 230 182" fill="none" stroke="#B0B0B0"/><path d="M187 154C205 156 221 172 231 207" fill="none" stroke="#B0B0B0"/></svg><svg x="176" y="150" width="9" height="9"><use href="#exMr"/></svg><path d="M187 154C210 154 217 100 237 100" fill="none" stroke="#B0B0B0"/><path d="M187 154C210 154 217 124 237 124" fill="none" stroke="#B0B0B0"/><path d="M187 154C210 154 217 149 237 149" fill="none" stroke="#B0B0B0"/><path d="M187 154C210 154 217 187 237 187" fill="none" stroke="#B0B0B0"/><path d="M187 154C205 157 221 172 231 207" fill="none" stroke="#B0B0B0"/><svg x="240" y="93" width="14" height="13"><use href="#blk"/></svg><svg x="320" y="96" width="9" height="9"><use href="#exMr"/></svg><svg x="240" y="117" width="14" height="13"><use href="#blk"/></svg><svg x="240" y="142" width="14" height="13"><use href="#blk"/></svg><svg x="341" y="145" width="9" height="9"><use href="#exMr"/></svg><svg x="240" y="180" width="14" height="13"><use href="#blk"/></svg><svg x="321" y="183" width="9" height="9"><use href="#exMr"/></svg><svg x="457" y="84" width="14" height="10"><use href="#prop"/></svg><svg x="457" y="106" width="14" height="10"><use href="#prop"/></svg><svg x="457" y="133" width="14" height="10"><use href="#prop"/></svg><svg x="457" y="155" width="14" height="10"><use href="#prop"/></svg><svg x="457" y="182" width="14" height="10"><use href="#prop"/></svg><path d="M332 100C385 100 405 89 447 89" fill="none" stroke="#B0B0B0"/><path d="M332 100C385 100 405 111 447 111" fill="none" stroke="#B0B0B0"/><path d="M352 149C385 149 405 138 447 138" fill="none" stroke="#B0B0B0"/><path d="M352 149C385 149 405 160 447 160" fill="none" stroke="#B0B0B0"/><path d="M332 187.5H447" stroke="#B0B0B0"/><path d="M237.0 100.0L233.9 107.6L233.2 105.2L230.7 105.3Z" fill="#111"/><path d="M237.0 124.5L231.1 130.2L231.5 127.7L229.1 126.8Z" fill="#111"/><path d="M237.0 149.0L229.5 152.4L230.7 150.1L228.8 148.4Z" fill="#111"/><path d="M237.0 187.0L229.5 183.7L232.0 183.1L231.9 180.5Z" fill="#111"/><path d="M453.5 89.5L446.0 91.4L447.5 89.5L446.0 87.6Z" fill="#111"/><path d="M453.5 111.0L446.0 112.9L447.5 111.0L446.0 109.1Z" fill="#111"/><path d="M453.5 138.0L446.0 139.9L447.5 138.0L446.0 136.1Z" fill="#111"/><path d="M453.5 160.0L446.0 161.9L447.5 160.0L446.0 158.1Z" fill="#111"/><path d="M453.5 187.0L446.0 188.9L447.5 187.0L446.0 185.1Z" fill="#111"/></svg><div class="a" style="left:624px;top:22px;width:270px;height:40px;border:1px solid #777"></div><div class="t" style="left:738px;top:27px;"><b>Legend</b></div><div class="t" style="left:681px;top:44px;">Owned Element</div><div class="t" style="left:57px;top:148px;font-size:11px;letter-spacing:0.55px;">Sensitive Information</div><div class="t" style="left:257px;top:93px;">(<span class="r">S</span>) Cockpit</div><div class="t" style="left:257px;top:118px;font-size:11px;letter-spacing:0.55px;">(<span class="r">S</span>) Cruise Control</div><div class="t" style="left:257px;top:143px;font-size:11px;letter-spacing:0.55px;">(<span class="r">S</span>) Electronics</div><div class="t" style="left:257px;top:181px;font-size:11px;letter-spacing:0.55px;">(<span class="o">TS</span>) Radar</div><div class="t" style="left:474px;top:82px;">(RD) seats <span class="gy">: Seat</span></div><div class="t" style="left:474px;top:105px;font-size:11px;letter-spacing:0.55px;">(DISPLAY ONLY) yoke <span class="gy">: Yoke</span></div><div class="t" style="left:474px;top:132px;font-size:11px;letter-spacing:0.55px;">fuel measurement &nbsp;<span class="gy">: Fuel measurement</span></div><div class="t" style="left:474px;top:154px;font-size:11px;letter-spacing:0.55px;">(<span class="o">TS</span>) sensor <span class="gy">: Sensor</span></div><div class="t" style="left:474px;top:181px;font-size:11px;letter-spacing:0.55px;">clutter <span class="gy">: Clutter</span></div></div>
</div>

<!-- ============ GENERIC TABLE window ============ -->
<div id="w4">
<div class="a" style="left:375px;top:592px;width:768px;height:390px;background:#fff;border:1px solid #8E8F91"></div>
<div class="a blue" style="left:377px;top:594px;width:764px;height:23px"></div>
<svg class="a" style="left:375px;top:592px" width="768" height="27">
 <path d="M231.5 25V7.5Q231.5 5.5 234 5.5H367Q369.5 5.5 369.5 8V25Z" fill="url(#gTabI)" stroke="#A0A2A6"/>
 <path d="M11.5 25L31 6.5Q32 5.5 35 5.5H105Q107.5 5.5 109 8L112 13V25Z" fill="url(#gTabI)" stroke="#A0A2A6"/>
 <path d="M86.5 25.5L106 6Q107 5 110 5H227Q230.5 5 230.5 8V25.5Z" fill="url(#gAct)" stroke="#8E8F91"/>
</svg>
<svg class="a" style="left:411px;top:598px" width="16" height="16"><use href="#diag"/></svg>
<div class="t" style="left:431px;top:599px;width:37px;overflow:hidden">Sample</div>
<svg class="a" style="left:486px;top:597px" width="16" height="16"><use href="#tblI"/></svg>
<div class="t" style="left:505px;top:599px;font-weight:bold">Generic table</div>
<svg class="a" style="left:587px;top:600px" width="12" height="12"><path d="M2 2l7 7M9 2l-7 7" stroke="#111" stroke-width="1.6"/></svg>
<svg class="a" style="left:615px;top:597px" width="16" height="16"><use href="#dmI"/></svg>
<div class="t" style="left:636px;top:599px">Dependency matrix</div>
<svg class="a" style="left:1088px;top:597px" width="50" height="18">
 <path d="M10.5 4.5v9l-5-4.5z" fill="none" stroke="#111" stroke-width="1.3"/>
 <path d="M23.5 4.5v9l5-4.5z" fill="none" stroke="#111" stroke-width="1.3"/>
 <rect x="37.5" y="4.5" width="8" height="9" fill="none" stroke="#111" stroke-width="1.4"/><path d="M39.5 7h4 M39.5 9h4 M39.5 11h4" stroke="#111"/>
</svg>
<div class="a org" style="left:377px;top:617px;width:765px;height:365px"></div>
<div class="a" style="left:380px;top:619px;width:759px;height:360px;background:#F0F0F0"></div>
<div class="a blue" style="left:380px;top:619px;width:759px;height:25px"></div>
<div class="a tbg" style="left:381px;top:620px;width:38px;height:23px"></div><div class="a tbg" style="left:422px;top:620px;width:31px;height:23px"></div><div class="a tbg" style="left:458px;top:620px;width:31px;height:23px"></div><div class="a tbg" style="left:494px;top:620px;width:230px;height:23px"></div><div class="a tbg" style="left:727px;top:620px;width:96px;height:23px"></div><div class="a tbg" style="left:830px;top:620px;width:56px;height:23px"></div><div class="a tbg" style="left:891px;top:620px;width:43px;height:23px"></div><div class="a tbg" style="left:938px;top:620px;width:32px;height:23px"></div><div class="a tbg" style="left:974px;top:620px;width:50px;height:23px"></div><div class="a tbg" style="left:1027px;top:620px;width:26px;height:23px"></div><div class="a tbg" style="left:1058px;top:620px;width:32px;height:23px"></div><div class="a tbg" style="left:1094px;top:620px;width:44px;height:23px"></div><div class="sep" style="left:427px;top:624px"></div><div class="sep" style="left:463px;top:624px"></div><div class="sep" style="left:499px;top:624px"></div><div class="sep" style="left:733px;top:624px"></div><div class="sep" style="left:836px;top:624px"></div><div class="sep" style="left:897px;top:624px"></div><div class="sep" style="left:944px;top:624px"></div><div class="sep" style="left:980px;top:624px"></div><div class="sep" style="left:1030px;top:624px"></div><div class="sep" style="left:1064px;top:624px"></div><div class="sep" style="left:1100px;top:624px"></div>
<svg class="a" style="left:380px;top:619px" width="760" height="25">
 <svg x="7" y="4" width="14" height="16"><use href="#backB"/></svg>
 <svg x="28" y="4" width="9" height="6"><use href="#raq"/></svg>
 <svg x="55" y="5" width="15" height="14"><use href="#treeI"/></svg>
 <svg x="91" y="5" width="16" height="15"><use href="#validI"/></svg>
 <rect x="127" y="11" width="13" height="4" fill="#4A70D2"/><rect x="138" y="11" width="2" height="2" fill="#F0A030"/>
 <rect x="202" y="11" width="13" height="4" fill="#4A70D2"/><path d="M212 10.5h3 M213.5 9v3" stroke="#30B040" stroke-width="1.2"/>
 <path d="M331 5l2.5 2.5L331 10 M334.5 5l2.5 2.5-2.5 2.5" fill="none" stroke="#444"/>
 <g fill="#C4C4C4"><rect x="359" y="8" width="8" height="8"/><path d="M369 6l3-3 3 3z M369 15l3 3 3-3z"/><path d="M381 13l2.5 2.5 2.5-2.5z"/><path d="M393 12l5-5 5 5h-3v5h-4v-5z"/></g>
 <path d="M435 5l2.5 2.5L435 10 M438.5 5l2.5 2.5-2.5 2.5" fill="none" stroke="#444"/>
 <path d="M493 5l2.5 2.5L493 10 M496.5 5l2.5 2.5-2.5 2.5" fill="none" stroke="#444"/>
 <svg x="524" y="6" width="13" height="13"><use href="#gearI"/></svg><path d="M545 12h6l-3 3z" fill="#111"/>
 <path d="M572 16.5l6-6 6 6z" fill="#444"/>
 <g transform="translate(607 5)"><rect x="0.5" y="0.5" width="14" height="13" fill="#fff" stroke="#333"/><path d="M3 4h2 M3 7h2 M3 10h2" stroke="#D33" stroke-width="1.4"/><path d="M6 4h6 M6 7h6 M6 10h6" stroke="#333"/><path d="M24 7h6l-3 3z" fill="#111"/></g>
 <g transform="translate(660 5)"><circle cx="6" cy="6" r="4.2" fill="none" stroke="#444" stroke-width="1.8"/><path d="M9 9l4 4" stroke="#444" stroke-width="2.2"/></g>
 <g transform="translate(692 4)" fill="none" stroke="#2D5FC8" stroke-width="2.4"><path d="M2.5 9a5 5 0 0 1 8.5-4.5"/><path d="M12.5 8a5 5 0 0 1-8.5 4.5"/><path d="M9 2.5l3 2.5-3.5 2" stroke-width="1.6"/><path d="M6 15.5l-3-2.5 3.5-2" stroke-width="1.6"/></g>
 <path d="M731.5 6.5v12l9-6z" fill="none" stroke="#555"/>
 <path d="M752 11h6l-3 3z" fill="#111"/>
</svg>
<div class="t" style="left:526px;top:625px">Add New</div>
<div class="t" style="left:602px;top:625px">Add Existing...</div>
<!-- criteria -->
<div class="a" style="left:382px;top:652px;width:754px;height:35px;border:1px solid #A8A8A8;box-shadow:inset 1px 1px 0 #fff,1px 1px 0 #fff"></div>
<div class="t" style="left:387px;top:646px;background:#F0F0F0;padding:0 2px">Criteria</div>
<div class="t" style="left:396px;top:667px">Element Type:</div>
<div class="fld" style="left:475px;top:662px;width:124px;height:22px"></div>
<div class="t" style="left:481px;top:667px">Block</div>
<div class="btn" style="left:606px;top:664px;width:38px;height:19px">...</div>
<div class="t" style="left:655px;top:667px">Scope (optional):</div>
<div class="fld" style="left:751px;top:662px;width:146px;height:22px"></div>
<div class="t" style="left:757px;top:667px">Sensitive Information</div>
<div class="t" style="left:877px;top:667px;font-size:9px;color:#999">{}xy</div>
<div class="btn" style="left:903px;top:664px;width:39px;height:19px">...</div>
<div class="t" style="left:953px;top:667px">Filter:</div>
<div class="fld" style="left:988px;top:662px;width:144px;height:22px"></div>
<svg class="a" style="left:992px;top:665px" width="22" height="16"><path d="M1.5 2.5h11l-4 5v6l-3-2v-4z" fill="#fff" stroke="#444"/><path d="M15 6h5l-2.5 3z" fill="#333"/></svg>
<!-- table -->
<div class="a" style="left:380px;top:690px;width:758px;height:291px;background:#fff;border-left:1px solid #8A93A0;border-top:1px solid #8A93A0"></div>
<div class="a" style="left:381px;top:691px;width:757px;height:22px;background:#EFEFEF;border:1px solid #fff;border-right:none;border-bottom:none"></div>
<div class="a" style="left:381px;top:712px;width:757px;height:2px;background:#6E6E6E"></div>
<div class="a" style="left:415px;top:692px;width:1px;height:290px;background:#A0A0A0"></div>
<div class="t" style="left:381px;top:696px;width:34px;text-align:center">#</div>
<div class="t" style="left:757px;top:696px">Name</div>
<div class="a" style="left:381px;top:733px;width:757px;height:1px;background:#A0A0A0"></div><div class="t" style="left:381px;top:717px;width:34px;text-align:center">1</div><svg class="a" style="left:438px;top:716px" width="14" height="13"><use href="#blk"/></svg><div class="t" style="left:462px;top:717px;letter-spacing:-0.7px">(<span class="c">C</span>)</div><div class="t" style="left:482px;top:717px">Fuel System</div><div class="a" style="left:381px;top:753px;width:757px;height:1px;background:#A0A0A0"></div><div class="t" style="left:381px;top:737px;width:34px;text-align:center">2</div><svg class="a" style="left:438px;top:736px" width="14" height="13"><use href="#blk"/></svg><div class="t" style="left:462px;top:737px;letter-spacing:-0.7px">(<span class="c">C</span>)</div><div class="t" style="left:482px;top:737px">Landing Gear</div><div class="a" style="left:381px;top:773px;width:757px;height:1px;background:#A0A0A0"></div><div class="t" style="left:381px;top:757px;width:34px;text-align:center">3</div><svg class="a" style="left:438px;top:756px" width="14" height="13"><use href="#blk"/></svg><div class="t" style="left:462px;top:757px;letter-spacing:-0.7px">(<span class="gr">R</span>)</div><div class="t" style="left:481px;top:757px">STOVL</div><div class="a" style="left:381px;top:793px;width:757px;height:1px;background:#A0A0A0"></div><div class="t" style="left:381px;top:777px;width:34px;text-align:center">4</div><svg class="a" style="left:438px;top:776px" width="14" height="13"><use href="#blk"/></svg><div class="t" style="left:462px;top:777px;letter-spacing:-0.7px">(<span class="">RD</span>)</div><div class="t" style="left:489px;top:777px">Climate Control</div><div class="a" style="left:381px;top:813px;width:757px;height:1px;background:#A0A0A0"></div><div class="t" style="left:381px;top:797px;width:34px;text-align:center">5</div><svg class="a" style="left:438px;top:796px" width="14" height="13"><use href="#blk"/></svg><div class="t" style="left:462px;top:797px;letter-spacing:-0.7px">(<span class="r">S</span>)</div><div class="t" style="left:480px;top:797px">Cockpit</div><div class="a" style="left:381px;top:833px;width:757px;height:1px;background:#A0A0A0"></div><div class="t" style="left:381px;top:817px;width:34px;text-align:center">6</div><svg class="a" style="left:438px;top:816px" width="14" height="13"><use href="#blk"/></svg><div class="t" style="left:462px;top:817px;letter-spacing:-0.7px">(<span class="r">S</span>)</div><div class="t" style="left:480px;top:817px">Cruise Control</div><div class="a" style="left:381px;top:853px;width:757px;height:1px;background:#A0A0A0"></div><div class="t" style="left:381px;top:837px;width:34px;text-align:center">7</div><svg class="a" style="left:438px;top:836px" width="14" height="13"><use href="#blk"/></svg><div class="t" style="left:462px;top:837px;letter-spacing:-0.7px">(<span class="r">S</span>)</div><div class="t" style="left:480px;top:837px">Electronics</div><div class="a" style="left:381px;top:873px;width:757px;height:1px;background:#A0A0A0"></div><div class="t" style="left:381px;top:857px;width:34px;text-align:center">8</div><svg class="a" style="left:438px;top:856px" width="14" height="13"><use href="#blk"/></svg><div class="t" style="left:462px;top:857px;letter-spacing:-0.7px">(<span class="r">S</span>)</div><div class="t" style="left:480px;top:857px">SoftwareDefinedRadio</div><div class="a" style="left:381px;top:893px;width:757px;height:1px;background:#A0A0A0"></div><div class="t" style="left:381px;top:877px;width:34px;text-align:center">9</div><svg class="a" style="left:438px;top:876px" width="14" height="13"><use href="#blk"/></svg><div class="t" style="left:462px;top:877px;letter-spacing:-0.7px">(<span class="o">TS</span>)</div><div class="t" style="left:486px;top:877px">Radar</div><div class="a" style="left:381px;top:913px;width:757px;height:1px;background:#A0A0A0"></div><div class="t" style="left:381px;top:897px;width:34px;text-align:center">10</div><svg class="a" style="left:438px;top:896px" width="14" height="13"><use href="#blk"/></svg><div class="t" style="left:462px;top:897px;letter-spacing:-0.7px">(<span class="g">U</span>)</div><div class="t" style="left:482px;top:897px">Aircraft Cabin</div><div class="a" style="left:381px;top:933px;width:757px;height:1px;background:#A0A0A0"></div><div class="t" style="left:381px;top:917px;width:34px;text-align:center">11</div><svg class="a" style="left:438px;top:916px" width="14" height="13"><use href="#blk"/></svg><div class="t" style="left:462px;top:917px;letter-spacing:-0.7px">(<span class="g">U</span>)</div><div class="t" style="left:482px;top:917px">CATOBAR</div><div class="a" style="left:381px;top:953px;width:757px;height:1px;background:#A0A0A0"></div><div class="t" style="left:381px;top:937px;width:34px;text-align:center">12</div><svg class="a" style="left:438px;top:936px" width="14" height="13"><use href="#blk"/></svg><div class="t" style="left:462px;top:937px;letter-spacing:-0.7px">(<span class="g">U</span>)</div><div class="t" style="left:482px;top:937px">ConventionalRadio</div><div class="a" style="left:381px;top:973px;width:757px;height:1px;background:#A0A0A0"></div><div class="t" style="left:381px;top:957px;width:34px;text-align:center">13</div><svg class="a" style="left:438px;top:956px" width="14" height="13"><use href="#blk"/></svg><div class="t" style="left:462px;top:957px;letter-spacing:-0.7px">(<span class="g">U</span>)</div><div class="t" style="left:482px;top:957px">CTOL</div><div class="a" style="left:1138px;top:691px;width:1px;height:290px;background:#8A93A0"></div>
<div class="a" style="left:377px;top:969px;width:765px;height:1px;background:#8A93A0"></div>
<div class="a org" style="left:377px;top:970px;width:765px;height:2px"></div>
<div class="a" style="left:375px;top:972px;width:768px;height:2px;background:#7A7A7A"></div>
</div>

</body></html>
